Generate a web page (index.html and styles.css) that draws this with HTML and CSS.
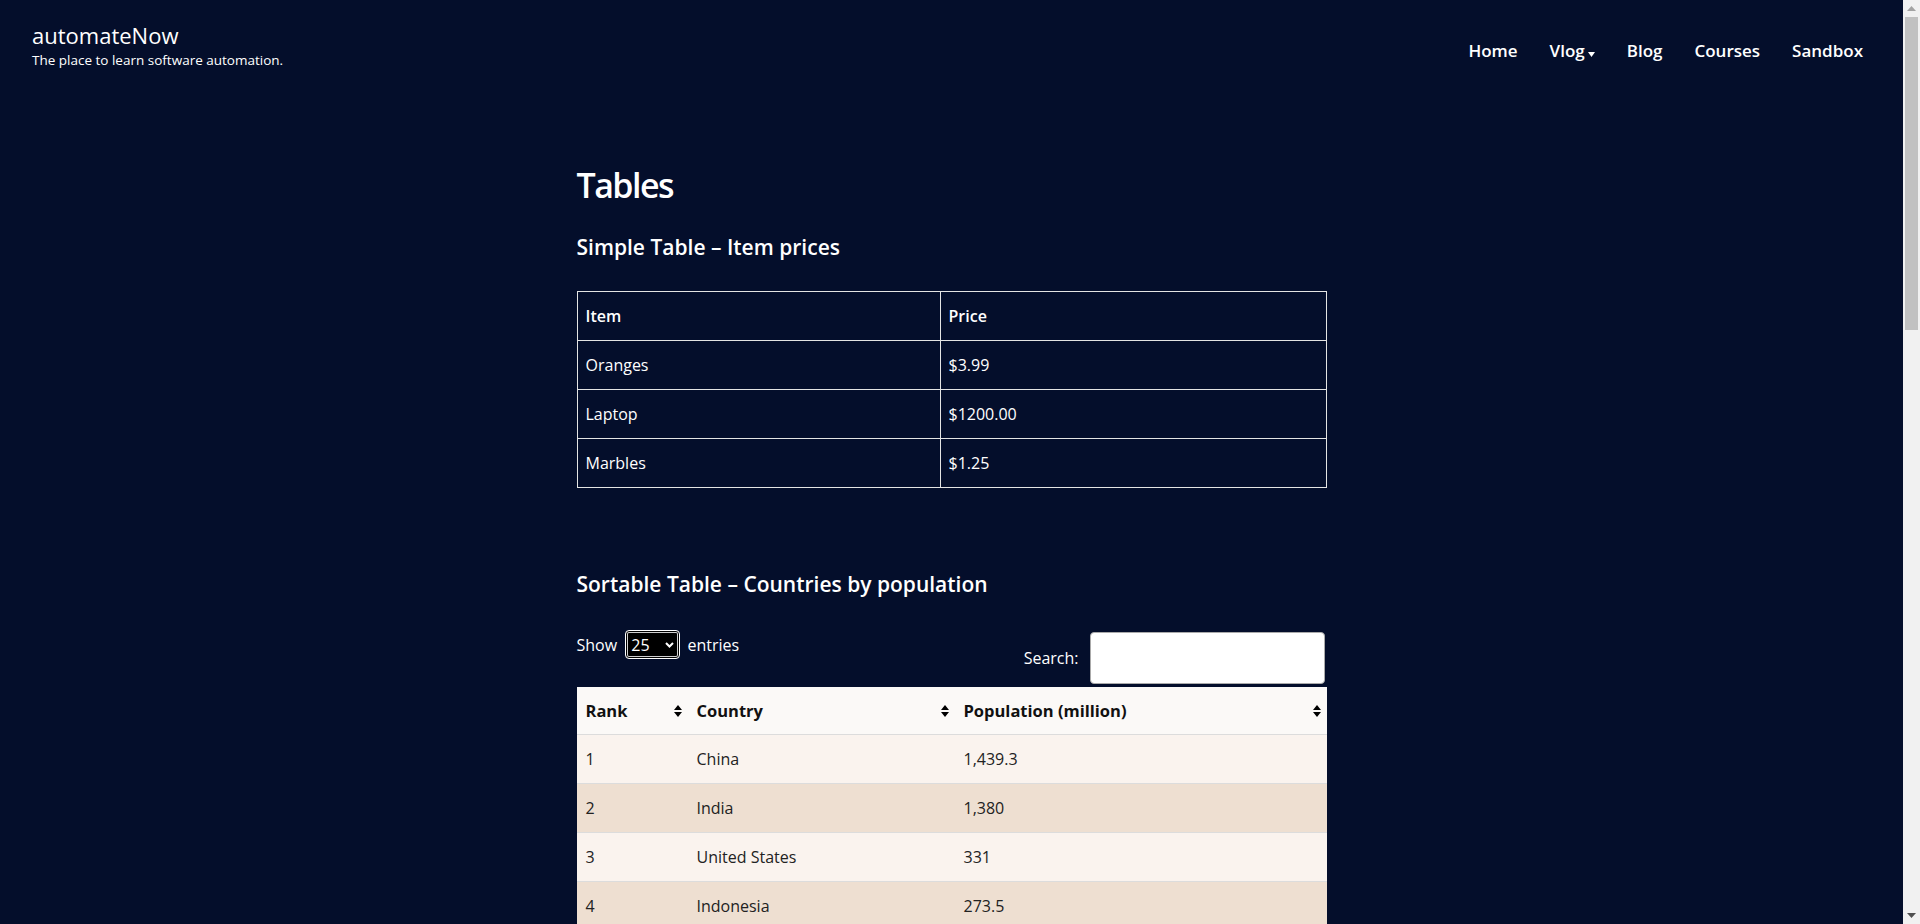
FILE: index.html
```html
<!DOCTYPE html>
<html lang="en">
<head>
<meta charset="utf-8">
<title>Tables | automateNow</title>
<link rel="stylesheet" href="styles.css">
</head>
<body>
<div class="page">
<header class="site-header">
  <div class="branding">
    <div class="site-title">automateNow</div>
    <div class="site-tagline">The place to learn software automation.</div>
  </div>
  <nav class="main-nav">
    <a class="nav-link" href="#">Home</a>
    <a class="nav-link" href="#">Vlog<svg class="caret" width="7" height="5" viewBox="0 0 7 5"><path d="M0 0H7L3.5 5Z" fill="#fff"/></svg></a>
    <a class="nav-link" href="#">Blog</a>
    <a class="nav-link" href="#">Courses</a>
    <a class="nav-link" href="#">Sandbox</a>
  </nav>
</header>

<main class="content">
  <h1 class="page-title">Tables</h1>

  <h2 class="section-title">Simple Table – Item prices</h2>
  <table class="simple-table">
    <thead>
      <tr><th class="col-item">Item</th><th>Price</th></tr>
    </thead>
    <tbody>
      <tr><td>Oranges</td><td>$3.99</td></tr>
      <tr><td>Laptop</td><td>$1200.00</td></tr>
      <tr><td>Marbles</td><td>$1.25</td></tr>
    </tbody>
  </table>

  <h2 class="section-title sortable-title">Sortable Table – Countries by population</h2>
  <div class="dt-controls">
    <div class="dt-length">
      <label class="dt-label">Show
        <span class="select-wrap">
          <select class="dt-select">
            <option>10</option>
            <option selected>25</option>
            <option>50</option>
            <option>100</option>
          </select>
          <svg class="select-chevron" width="9" height="6" viewBox="0 0 9 6"><path d="M1 1L4.5 4.5L8 1" fill="none" stroke="#fff" stroke-width="2"/></svg>
        </span>
        entries</label>
    </div>
    <div class="dt-filter">
      <label class="dt-label">Search:<input class="dt-search" type="search"></label>
    </div>
  </div>

  <table class="sortable-table">
    <thead>
      <tr>
        <th class="col-rank">Rank<svg class="sort-icon" width="8" height="12" viewBox="0 0 8 12"><path d="M4 0L8 5H0Z M0 7H8L4 12Z" fill="#000"/></svg></th>
        <th class="col-country">Country<svg class="sort-icon" width="8" height="12" viewBox="0 0 8 12"><path d="M4 0L8 5H0Z M0 7H8L4 12Z" fill="#000"/></svg></th>
        <th class="col-pop">Population (million)<svg class="sort-icon" width="8" height="12" viewBox="0 0 8 12"><path d="M4 0L8 5H0Z M0 7H8L4 12Z" fill="#000"/></svg></th>
      </tr>
    </thead>
    <tbody>
      <tr><td>1</td><td>China</td><td>1,439.3</td></tr>
      <tr><td>2</td><td>India</td><td>1,380</td></tr>
      <tr><td>3</td><td>United States</td><td>331</td></tr>
      <tr><td>4</td><td>Indonesia</td><td>273.5</td></tr>
      <tr><td>5</td><td>Pakistan</td><td>220.9</td></tr>
      <tr><td>6</td><td>Brazil</td><td>212.6</td></tr>
      <tr><td>7</td><td>Nigeria</td><td>206.1</td></tr>
      <tr><td>8</td><td>Bangladesh</td><td>164.7</td></tr>
      <tr><td>9</td><td>Russia</td><td>145.9</td></tr>
      <tr><td>10</td><td>Mexico</td><td>128.9</td></tr>
    </tbody>
  </table>
  <div class="dt-footer">
    <div class="dt-info">Showing 1 to 10 of 10 entries</div>
    <div class="dt-paging"><span class="page-btn">Previous</span><span class="page-btn current">1</span><span class="page-btn">Next</span></div>
  </div>

  <section class="after-tables">
    <p class="note">Use these tables to practice locating rows, columns and cells, sorting columns and filtering results with your automation tool of choice.</p>
  </section>
</main>

<footer class="site-footer">
  <div class="footer-inner">© 2024 automateNow · The place to learn software automation.</div>
</footer>
</div>

<div class="scrollbar" aria-hidden="true">
  <svg class="sb-arrow sb-up" width="9" height="5" viewBox="0 0 9 5"><path d="M4.5 0L9 5H0Z" fill="#a3a3a3"/></svg>
  <div class="sb-thumb"></div>
  <svg class="sb-arrow sb-down" width="9" height="5" viewBox="0 0 9 5"><path d="M0 0H9L4.5 5Z" fill="#505050"/></svg>
</div>
</body>
</html>
```

FILE: styles.css
```css
html, body {
  margin: 0;
  padding: 0;
}

body {
  background: #040e2b;
  color: #ffffff;
  font-family: "Open Sans", "Noto Sans", sans-serif;
  font-size: 16px;
  line-height: 24px;
}

.page {
  margin-right: 17px;
}

.site-header {
  display: flex;
  justify-content: space-between;
  align-items: flex-start;
  padding: 21px 40px 0 32px;
}

.site-title {
  font-size: 22px;
  line-height: 28px;
  font-weight: 500;
}

.site-tagline {
  margin-top: 2px;
  font-size: 13.5px;
  line-height: 18px;
}

.main-nav {
  display: flex;
  gap: 32px;
  padding-top: 18px;
}

.nav-link {
  color: #ffffff;
  text-decoration: none;
  font-weight: 600;
  font-size: 17px;
  line-height: 24px;
  display: inline-flex;
  align-items: center;
}

.caret {
  margin-left: 3px;
  margin-top: 6px;
}

.content {
  width: 750px;
  margin: 0 auto;
  padding-top: 95px;
}

.page-title {
  margin: 0;
  font-size: 34px;
  line-height: 42px;
  font-weight: 600;
  letter-spacing: -0.045em;
}

.section-title {
  margin: 28px 0 0;
  font-size: 21px;
  line-height: 27px;
  font-weight: 600;
}

.simple-table {
  margin-top: 30px;
  width: 750px;
  border-collapse: collapse;
  border: 1px solid #e4e4e4;
}

.simple-table th,
.simple-table td {
  border: 1px solid #e4e4e4;
  padding: 12px 8px;
  text-align: left;
  line-height: 24px;
}

.simple-table th {
  font-weight: 600;
}

.simple-table .col-item {
  width: 346px;
}

.sortable-title {
  margin-top: 83px;
}

.dt-controls {
  display: flex;
  justify-content: space-between;
  align-items: flex-start;
  margin-top: 32px;
  height: 57px;
}

.dt-label {
  font-size: 16px;
}

.select-wrap {
  position: relative;
  display: inline-block;
  vertical-align: baseline;
}

.dt-select {
  appearance: none;
  -webkit-appearance: none;
  width: 55px;
  height: 29px;
  padding: 0 0 0 5px;
  background: #000000;
  color: #ffffff;
  border: 1px solid #ffffff;
  border-radius: 4px;
  box-shadow: inset 0 0 0 1px #000, inset 0 0 0 2px #cfcfcf;
  font-family: inherit;
  font-size: 16px;
  margin: 0 3px 0 4px;
}

.select-chevron {
  position: absolute;
  right: 9px;
  top: 12px;
  pointer-events: none;
}

.dt-filter {
  margin-top: 2px;
}

.dt-filter .dt-label {
  display: flex;
  align-items: center;
  gap: 11px;
}

.dt-search {
  width: 235px;
  height: 52px;
  box-sizing: border-box;
  border: 1px solid #aaa;
  border-radius: 4px;
  background: #ffffff;
  margin-right: 2px;
}

.sortable-table {
  width: 750px;
  border-collapse: collapse;
  color: #111;
}

.sortable-table th {
  position: relative;
  background: #fbf9f7;
  text-align: left;
  font-weight: 700;
  font-size: 16.5px;
  padding: 12px 18px 11px 9px;
  border-bottom: 1px solid #dcdcdc;
}

.sortable-table .col-rank { width: 84px; }
.sortable-table .col-country { width: 240px; }

.sort-icon {
  position: absolute;
  right: 6px;
  top: 50%;
  margin-top: -6px;
}

.sortable-table td {
  padding: 12px 10px 12px 9px;
  border-top: 1px solid #dcdcdc;
  color: #222;
}

.sortable-table tbody tr:nth-child(odd) td { background: #faf3ee; }
.sortable-table tbody tr:nth-child(even) td { background: #eedfd1; }

.dt-footer {
  display: flex;
  justify-content: space-between;
  align-items: center;
  padding-top: 12px;
}

.dt-paging {
  display: flex;
  gap: 4px;
}

.page-btn {
  padding: 6px 12px;
  color: #bbb;
}

.page-btn.current {
  color: #fff;
  border: 1px solid #888;
  border-radius: 2px;
}

.after-tables {
  padding-top: 80px;
  min-height: 1050px;
}

.note {
  margin: 0;
}

.site-footer {
  padding: 40px 32px;
  border-top: 1px solid #1c2748;
}

.footer-inner {
  font-size: 14px;
  text-align: center;
  color: #c8ccd8;
}

.scrollbar {
  position: fixed;
  top: 0;
  right: 0;
  width: 17px;
  height: 100vh;
  background: #f1f1f1;
  display: flex;
  flex-direction: column;
  align-items: center;
}

.sb-arrow {
  flex: none;
}

.sb-up {
  margin-top: 6px;
}

.sb-thumb {
  width: 13px;
  height: 313px;
  margin-top: 6px;
  background: #c1c1c1;
}

.sb-down {
  margin-top: auto;
  margin-bottom: 6px;
}
```
